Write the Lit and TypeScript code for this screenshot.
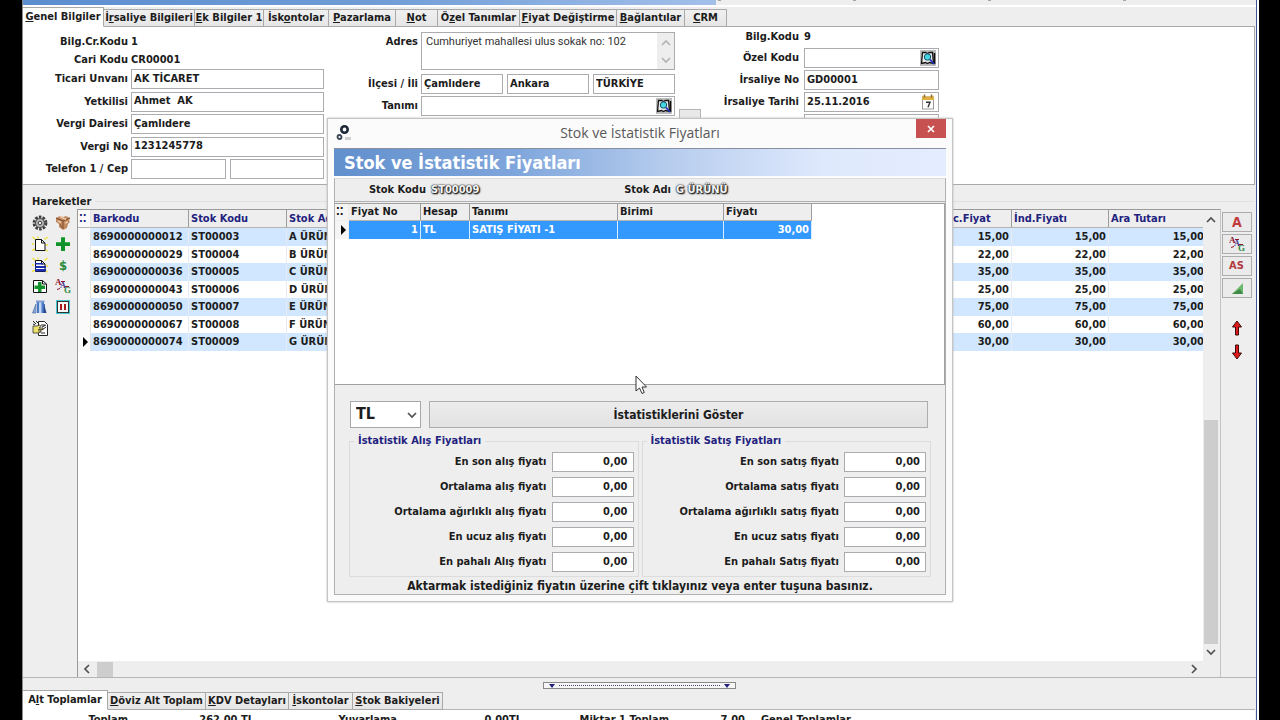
import { LitElement, html, css, svg, nothing } from "lit";
import { customElement } from "lit/decorators.js";

const base = css`
  * {
    box-sizing: border-box;
  }
  :host {
    font-family: "DejaVu Sans Condensed", "DejaVu Sans", "Noto Sans", sans-serif;
    font-size: 11px;
    font-weight: bold;
    line-height: 14px;
    color: #1c1c1c;
  }
  input,
  button,
  select,
  textarea {
    font: inherit;
    color: inherit;
    margin: 0;
    border-radius: 0;
    outline: none;
  }
  input {
    min-width: 0;
    width: 100%;
    height: 20px;
    border: 1px solid #ababb0;
    background: #fff;
    padding: 0 2px 2px;
  }
  button {
    padding: 0;
    border: 0;
    background: none;
  }
  table {
    border-collapse: separate;
    border-spacing: 0;
    table-layout: fixed;
  }
  th,
  td {
    padding: 0 2px;
    overflow: hidden;
    white-space: nowrap;
    text-align: left;
    line-height: 16px;
  }
  th {
    background: #eeeeee;
    border-right: 1px solid #9c9c9c;
    border-bottom: 1px solid #b4b4b4;
    height: 17px;
  }
  .num {
    text-align: right;
  }
  svg {
    display: block;
  }
`;

const icon = (body: unknown, size = 16) =>
  html`<svg width=${size} height=${size} viewBox="0 0 16 16" aria-hidden="true">${body}</svg>`;

const page = svg`<path d="M3.5 3.5h6l3.500 3.500v7.500h-9.500z" fill="#fff" stroke="#111"/><path d="M9.500 3.500v3.500h3.500" fill="none" stroke="#111"/>`;
const rays = svg`<path d="M0.500 1l3 2.500M6 0.500v2M0 14.500l3-1.500M12.500 3.500L15.500 1M14 9h2M0 8h2M13.500 14l2 1" stroke="#f1e23c" stroke-width="1.500"/>`;
const letters = svg`<g font-family="Liberation Serif, serif" font-weight="bold"><text x="0" y="7" font-size="9" fill="#8c1630">A</text><text x="5" y="10" font-size="8" fill="#3b2d8c">A</text><text x="9" y="15" font-size="9" fill="#2f8c46">G</text></g><path d="M6 3.500h4M2 11.500l3-1M10 8.500h4" stroke="#8c1630"/>`;

const icons: Record<string, unknown> = {
  gear: svg`<circle cx="8" cy="8" r="5.600" fill="none" stroke="#3f3f3f" stroke-width="3.600" stroke-dasharray="2.400 1.118"/><circle cx="8" cy="8" r="4.500" fill="#b4b4b4" stroke="#555" stroke-width="1.200"/><circle cx="8" cy="8" r="1.800" fill="#eee" stroke="#444"/>`,
  box: svg`<path d="M1 3l4-2 3 1 3-1 4 2-1 3 1 1-2 2-1 4-4 2-4-3V9L1 7z" fill="#c08a60"/><path d="M1 3l7 3 7-3M8 6v8" stroke="#7d4a2a" fill="none"/><path d="M5 1.500l6 3M10 8l3-1M3 6l3 1.500" stroke="#ecc8a4" stroke-width="1.500"/><path d="M5 9l2 4" stroke="#8d5733"/>`,
  doc: svg`${rays}${page}`,
  plus: svg`<path d="M6 1h4v5h5v4h-5v5H6v-5H1V6h5z" fill="#12922a"/><path d="M6 1h4v1H6zM1 6h5v1H1zM10 6h5v1h-5z" fill="#3fb353"/>`,
  lines: svg`${rays}${page}<path d="M3 6h8v1.500H3zM3 9h11v2H3zM3 12h11v2.500H3z" fill="#1a2bb0"/>`,
  dollar: svg`<text x="4" y="13" font-size="13" font-weight="bold" fill="#2a8a3c" font-family="DejaVu Sans Condensed, sans-serif">$</text>`,
  docplus: svg`<path d="M1.500 2.500h9l4 3.500v8.500h-13z" fill="#fff" stroke="#111"/><path d="M10.500 2.500v3.500h4" fill="none" stroke="#111"/><path d="M6 4h3.500v3.500H13v3.500H9.500v3H6v-3H2.500V7.500H6z" fill="#12922a"/>`,
  letters,
  jars: svg`<path d="M4 2h8v3h1v9H5V5z" fill="#4c79c4"/><path d="M7 2h2.500v12H7z" fill="#c2d7f5"/><path d="M0.500 14L4 5v9z" fill="#8eacd9" stroke="#4c6da6" stroke-width=".7"/><path d="M12 5l2.500 9h-3z" fill="#27468c"/><path d="M4 1.500h8.500v2H4z" fill="#7d9dd2"/>`,
  pause: svg`<rect x="1" y="1" width="14" height="14" fill="#42c7cf"/><rect x="2.500" y="2.500" width="11" height="11" fill="#f8f8f8" stroke="#333"/><path d="M5 5h2v6H5zM9 5h2v6H9z" fill="#a51c1c"/>`,
  hand: svg`<path d="M6.500 1.500h6l3 3v11h-9z" fill="#fff" stroke="#222"/><path d="M1 1l3 3M4 1l3 3M1 4l2 1M9 5h4M10 7l4-2M10 10l4-3M9 13h4" stroke="#222"/><path d="M1 6h4l3-1 1 1.500L7 8h4v1.500H9V12l-3 1H1z" fill="#ece06b" stroke="#333" stroke-width=".8"/><path d="M6 9.500h3M6 11h3" stroke="#333" stroke-width=".8"/>`,
  lookup: svg`<rect width="16" height="16" fill="#bcbcbc"/><path d="M1.500 13.500l1-11h3l2 1 2-1h3l1 11-4-1-2 1-2-1z" fill="#e8e8e8" stroke="#111" stroke-width="1.300"/><path d="M14.500 3v11" stroke="#111" stroke-width="1.600"/><circle cx="7.500" cy="7" r="3.200" fill="#45d6e0" stroke="#14506c"/><path d="M10 9.500l4 4.500" stroke="#2030c0" stroke-width="1.800"/>`,
  calendar: svg`<rect x="2.500" y="3" width="11" height="12" fill="#fff" stroke="#9a9a9a"/><path d="M2 2.500h12V6H2z" fill="#dfae3e"/><path d="M4.500 .5v3M11.500 .5v3" stroke="#8a6b22" stroke-width="1.500"/><path d="M6 8.200h4l-2 5" fill="none" stroke="#333" stroke-width="1.400"/>`,
  redA: svg`<text x="3" y="13" font-size="14" font-weight="bold" fill="#c03a3e" font-family="DejaVu Sans Condensed, sans-serif">A</text>`,
  triangle: svg`<path d="M3 14L14 3v11z" fill="#6cb96e"/><path d="M3 14L11 9l3 5z" fill="#3f8a48"/>`,
  up: svg`<path d="M8 1l4.500 6H9.500v8h-3V7H3.500z" fill="#e01b1b" stroke="#3c0a0a"/>`,
  down: svg`<path d="M8 15l4.500-6H9.500V1h-3v8H3.500z" fill="#e01b1b" stroke="#3c0a0a"/>`,
};

const chevron = (dir: "up" | "down" | "left" | "right", color = "#505050") => {
  const d = { up: "M1 7l4-4 4 4", down: "M1 3l4 4 4-4", left: "M7 1L3 5l4 4", right: "M3 1l4 4-4 4" }[dir];
  return html`<svg width="10" height="10" viewBox="0 0 10 10" aria-hidden="true">
    <path d=${d} fill="none" stroke=${color} stroke-width="1.700" />
  </svg>`;
};

type Tab = [string, string, string];
const tabStrip = (tabs: Tab[], kind: string) => html`<div class="tabs ${kind}" role="tablist">
  ${tabs.map(
    ([a, key, b], i) => html`<button role="tab" class="tab ${i ? "" : "active"}" aria-selected=${i ? "false" : "true"}><span>${a}<u>${key}</u>${b}</span></button>`
  )}
</div>`;

@customElement("price-dialog")
class PriceDialog extends LitElement {
  static styles = [
    base,
    css`
      :host {
        display: block;
        width: 626px;
        background: #fbfbfb;
        border: 1px solid #c4c4c4;
        box-shadow: 0 0 2px #bbb;
        padding: 0 6px 6px;
      }
      .title {
        height: 29px;
        display: grid;
        grid-template-columns: 30px 1fr 30px;
        align-items: start;
        font: 14px/28px "Open Sans", "Noto Sans", sans-serif;
        color: #585858;
        text-align: center;
      }
      .logo {
        margin: 5px 0 0 1px;
      }
      .close {
        height: 19px;
        background: #c75050;
        display: grid;
        place-items: center;
      }
      .banner {
        height: 28px;
        border-top: 1px solid #8890a0;
        background: linear-gradient(to right, #6290cd, #7fa6dc 30%, #b7cdee 55%, #dfe9fd 80%, #e4edfe);
        color: #fff;
        font-size: 18px;
        line-height: 27px;
        padding-left: 10px;
        margin: 0 0 2px;
      }
      .body {
        background: #eeeeee;
        border: 1px solid #b0b0b0;
        border-top-color: #dcdcdc;
      }
      .info {
        height: 23px;
        display: grid;
        grid-template-columns: 91px 100px 135px 1fr;
        column-gap: 5px;
        line-height: 22px;
        border-bottom: 1px solid #b0b0b0;
        margin: 0 0 1px;
      }
      .info dt {
        text-align: right;
      }
      .info dd {
        margin: 0;
        color: #f4f4f4;
        text-shadow: 1px 1px 1px #222, 0 0 2px #222, 0 0 1px #222, 1px 1px 2px #555;
      }
      .grid {
        height: 182px;
        background: #fff;
        border: 1px solid #a0a0a0;
        border-left: 0;
      }
      .grid table {
        width: 477px;
      }
      .c0 { width: 14px; }
      .c1 { width: 72px; }
      .c2 { width: 49px; }
      .c3 { width: 148px; }
      .c4 { width: 106px; }
      .c5 { width: 88px; }
      .grid td {
        height: 18px;
        background: #3399ff;
        color: #fff;
        border-right: 1px solid #d8ebff;
        padding-bottom: 1px;
      }
      .grid td.mark,
      .grid th.mark {
        background: #f4f4f4;
        color: #111;
        padding: 0 0 0 1px;
        border-color: #eee;
      }
      .row {
        display: grid;
        grid-template-columns: 71px 1fr;
        gap: 8px;
        padding: 16px 17px 0 15px;
      }
      .pick {
        position: relative;
      }
      select {
        appearance: none;
        width: 100%;
        height: 27px;
        border: 1px solid #a8a8a8;
        background: #fff;
        font-size: 16px;
        padding: 0 5px 2px;
      }
      .pick svg {
        position: absolute;
        right: 4px;
        top: 9px;
        pointer-events: none;
      }
      .show {
        height: 27px;
        border: 1px solid #adadad;
        background: linear-gradient(#ececec, #e2e2e2);
        font-size: 12px;
      }
      .groups {
        display: grid;
        grid-template-columns: 1fr 1fr;
        gap: 3px;
        padding: 6px 14px 0;
      }
      fieldset {
        margin: 0;
        border: 1px solid #dcdcdc;
        min-width: 0;
        padding: 4px 4px 4px;
        display: grid;
        gap: 5px;
      }
      legend {
        color: #22227e;
        padding: 0 4px;
      }
      .field {
        display: grid;
        grid-template-columns: 1fr 82px;
        gap: 5px;
        text-align: right;
        align-items: center;
      }
      .field input {
        text-align: right;
        padding-right: 5px;
      }
      .hint {
        margin: 0;
        text-align: center;
        font-size: 12px;
        line-height: 15px;
        height: 17px;
        padding-top: 2px;
      }
    `,
  ];

  private group(title: string, prefix: string, labels: string[]) {
    return html`<fieldset>
      <legend>${title}</legend>
      ${labels.map(
        (l, i) => html`<div class="field"><label for=${prefix + i}>${l}</label><input id=${prefix + i} .value=${"0,00"} /></div>`
      )}
    </fieldset>`;
  }

  render() {
    return html`
      <div class="title">
        <svg class="logo" width="18" height="18" viewBox="0 0 18 18" aria-hidden="true">
          <circle cx="9.500" cy="5.500" r="3.200" fill="none" stroke="#1d2838" stroke-width="2.600" />
          <circle cx="4.500" cy="13" r="2" fill="none" stroke="#3a4656" stroke-width="1.800" />
          <path d="M10 13h6v3h-6z" fill="#d0d0d0" />
        </svg>
        <span>Stok ve İstatistik Fiyatları</span>
        <button class="close" aria-label="Kapat">
          <svg width="8" height="8" viewBox="0 0 8 8"><path d="M1 1l6 6M7 1L1 7" stroke="#fff" stroke-width="1.700" /></svg>
        </button>
      </div>
      <h2 class="banner">Stok ve İstatistik Fiyatları</h2>
      <div class="body">
        <dl class="info">
          <dt>Stok Kodu</dt><dd>ST00009</dd><dt>Stok Adı</dt><dd>G ÜRÜNÜ</dd>
        </dl>
        <div class="grid">
          <table>
            <colgroup>${[0, 1, 2, 3, 4, 5].map((i) => html`<col class="c${i}" />`)}</colgroup>
            <thead>
              <tr><th class="mark">⁚⁚</th><th>Fiyat No</th><th>Hesap</th><th>Tanımı</th><th>Birimi</th><th>Fiyatı</th></tr>
            </thead>
            <tbody>
              <tr>
                <td class="mark"><svg width="12" height="12" viewBox="0 0 12 12"><path d="M5 1l5 5-5 5z" fill="#000" /></svg></td>
                <td class="num">1</td><td>TL</td><td>SATIŞ FİYATI -1</td><td></td><td class="num">30,00</td>
              </tr>
            </tbody>
          </table>
        </div>
        <div class="row">
          <div class="pick"><select aria-label="Döviz"><option>TL</option></select>${chevron("down")}</div>
          <button class="show">İstatistiklerini Göster</button>
        </div>
        <div class="groups">
          ${this.group("İstatistik Alış Fiyatları", "alis", ["En son alış fiyatı", "Ortalama alış fiyatı", "Ortalama ağırlıklı alış fiyatı", "En ucuz alış fiyatı", "En pahalı Alış fiyatı"])}
          ${this.group("İstatistik Satış Fiyatları", "satis", ["En son satış fiyatı", "Ortalama satış fiyatı", "Ortalama ağırlıklı satış fiyatı", "En ucuz satış fiyatı", "En pahalı Satış fiyatı"])}
        </div>
        <p class="hint">Aktarmak istediğiniz fiyatın üzerine çift tıklayınız veya enter tuşuna basınız.</p>
      </div>
    `;
  }
}

const topTabs: Tab[] = [
  ["", "G", "enel Bilgiler"], ["İ", "r", "saliye Bilgileri"], ["", "E", "k Bilgiler 1"], ["İsk", "o", "ntolar"], ["", "P", "azarlama"],
  ["", "N", "ot"], ["Ö", "z", "el Tanımlar"], ["", "F", "iyat Değiştirme"], ["", "B", "ağlantılar"], ["", "C", "RM"],
];
const bottomTabs: Tab[] = [
  ["A", "l", "t Toplamlar"], ["", "D", "öviz Alt Toplam"], ["", "K", "DV Detayları"], ["", "İ", "skontolar"], ["", "S", "tok Bakiyeleri"],
];
const rows = [
  ["8690000000012", "ST00003", "A ÜRÜNÜ", "15,00"],
  ["8690000000029", "ST00004", "B ÜRÜNÜ", "22,00"],
  ["8690000000036", "ST00005", "C ÜRÜNÜ", "35,00"],
  ["8690000000043", "ST00006", "D ÜRÜNÜ", "25,00"],
  ["8690000000050", "ST00007", "E ÜRÜNÜ", "75,00"],
  ["8690000000067", "ST00008", "F ÜRÜNÜ", "60,00"],
  ["8690000000074", "ST00009", "G ÜRÜNÜ", "30,00"],
];
const tools: [string, string][] = [
  ["gear", "Ayarlar"], ["box", "Paket"], ["doc", "Yeni"], ["plus", "Ekle"], ["lines", "Liste"], ["dollar", "Fiyat"],
  ["docplus", "Yeni satır"], ["letters", "Harfler"], ["jars", "Stok"], ["pause", "Beklet"], ["hand", "Seç"],
];

@customElement("app-root")
class AppRoot extends LitElement {
  static styles = [
    base,
    css`
      :host {
        display: block;
        position: relative;
        height: 100vh;
        overflow: hidden;
        background: #000;
        padding: 0 21px 0 22px;
      }
      .window {
        height: 100%;
        background: #eeeeee;
        border-left: 1px solid #8c8c8c;
        border-right: 2px solid #fff;
        display: flex;
        flex-direction: column;
      }
      .inner {
        flex: 1;
        min-height: 0;
        border-right: 1px solid #3d5990;
        display: flex;
        flex-direction: column;
      }
      .caption {
        height: 7px;
        flex: none;
        border-bottom: 2px solid #fff;
        display: flex;
      }
      .caption span {
        width: 693px;
        background: linear-gradient(to right, #5c8ecf, #6f9cd6 50%, #a3c0ea);
      }
      .caption i {
        flex: 1;
        height: 1px;
        background: repeating-linear-gradient(to right, #eee 0 2px, #a4a4a4 2px 5px, #eee 5px 135px);
      }
      .tabs {
        flex: none;
        height: 20px;
        display: grid;
        align-items: end;
        position: relative;
        margin-bottom: -1px;
      }
      .tabs.main {
        grid-template-columns: 81px 91px 69px 65px 67px 42px 82px 97px 68px 42px;
      }
      .tabs.totals {
        grid-template-columns: 85px 98px 83px 64px 90px;
      }
      .tab {
        height: 18px;
        border: 1px solid #a9a9a9;
        border-left: 0;
        background: linear-gradient(#f0f0f0, #e6e6e6);
        line-height: 16px;
        white-space: nowrap;
        overflow: visible;
      }
      .tab.active {
        height: 20px;
        background: #fff;
        border-bottom-color: #fff;
        line-height: 17px;
        padding-bottom: 1px;
      }
      .panel {
        flex: none;
        background: #fff;
        border: 1px solid #a9a9a9;
        border-left: 0;
        margin-right: 1px;
        height: 159px;
        display: grid;
        grid-template-columns: 301px 351px 1fr;
      }
      .form {
        display: grid;
        align-content: start;
        align-items: center;
        column-gap: 3px;
        text-align: right;
      }
      .form output {
        text-align: left;
      }
      .left {
        grid-template-columns: 105px 193px;
        grid-template-rows: 18px 17px 22px 23px 22px 23px 22px;
        padding-top: 6px;
      }
      .middle {
        grid-template-columns: 94px 254px;
        grid-template-rows: 41px 22px 22px;
        padding-top: 5px;
      }
      .right {
        grid-template-columns: 98px 135px;
        grid-template-rows: 20px;
        grid-auto-rows: 22px;
        column-gap: 5px;
      }
      .two,
      .three {
        display: grid;
        gap: 4px;
      }
      .two {
        grid-template-columns: 95px 1fr;
      }
      .three {
        grid-template-columns: repeat(3, 1fr);
      }
      .top {
        align-self: start;
        padding-top: 3px;
      }
      .area {
        display: flex;
        height: 38px;
        border: 1px solid #ababb0;
        align-self: start;
      }
      textarea {
        flex: 1;
        min-width: 0;
        resize: none;
        border: 0;
        padding: 1px 4px;
        overflow: hidden;
        font: 11px/15px Roboto, "Liberation Sans", sans-serif;
        color: #333;
      }
      .spin {
        width: 17px;
        background: #eee;
        display: flex;
        flex-direction: column;
        justify-content: space-between;
        align-items: center;
        padding: 5px 0 4px;
      }
      .lookup {
        position: relative;
        display: flex;
      }
      .lookup button {
        position: absolute;
        right: 3px;
        top: 2px;
      }
      .tiny {
        background: #e8e8e8;
        border: 1px solid #b5b5b5;
        width: 22px;
        height: 12px;
        margin: 82px 0 0 4px;
      }
      .side {
        display: flex;
      }
      .caption2 {
        flex: none;
        margin: 9px 2px 0 0;
        padding-left: 9px;
        font-size: 11px;
        line-height: 15px;
        display: flex;
        align-items: center;
        gap: 4px;
      }
      .caption2::after {
        content: "";
        flex: 1;
        border-top: 1px solid #e0e0e0;
      }
      .work {
        flex: 1;
        min-height: 0;
        display: grid;
        grid-template-columns: 54px 1fr 35px;
        border-bottom: 1px solid #b5b5b5;
      }
      .tools {
        display: grid;
        grid-template-columns: 23px 23px;
        grid-auto-rows: 21px;
        align-content: start;
        align-items: center;
        justify-items: center;
        padding: 3px 0 0 5px;
      }
      .sheet {
        border: 1px solid #9a9a9a;
        border-bottom: 0;
        border-right-color: #c4c4c4;
        background: #eeeeee;
        display: grid;
        grid-template-columns: 1fr 17px;
        grid-template-rows: 1fr 16px;
        min-height: 0;
        min-width: 0;
      }
      .view {
        background: #fff;
        overflow: hidden;
        min-width: 0;
      }
      .view table {
        width: calc(100% + 4px);
      }
      .view th {
        color: #22227e;
        height: 18px;
        padding-top: 1px;
      }
      .view th.cut {
        padding-left: 0;
      }
      .view td {
        height: 17px;
        border-right: 1px solid #e6ecf2;
      }
      .view tr:nth-child(odd) td {
        background: #d0e7ff;
        height: 18px;
      }
      .view tr td.mark,
      .view tr:nth-child(odd) td.mark,
      .view th.mark {
        background: #fafafa;
        padding: 0 0 0 1px;
        border-right-color: #e4e4e4;
      }
      .k0 { width: 13px; }
      .k1 { width: 98px; }
      .k2 { width: 98px; }
      .k4 { width: 59px; }
      .k5 { width: 97px; }
      .k6 { width: 98px; }
      .vbar {
        display: flex;
        flex-direction: column;
        align-items: center;
        padding: 5px 1px 4px 0;
      }
      .vthumb {
        width: 14px;
        flex: 226;
        background: #cdcdcd;
        margin-bottom: 3px;
      }
      .vspace {
        flex: 196;
      }
      .hbar {
        grid-column: 1 / -1;
        display: flex;
        align-items: center;
        gap: 5px;
        padding: 0 21px 0 4px;
      }
      .hthumb {
        width: 16px;
        height: 15px;
        background: #cdcdcd;
      }
      .grow {
        flex: 1;
      }
      .actions {
        display: flex;
        flex-direction: column;
        align-items: center;
        gap: 2px;
        padding: 3px 4px 0 0;
      }
      .act {
        width: 30px;
        height: 20px;
        border: 1px solid #adadad;
        background: #ebebeb;
        display: grid;
        place-items: center;
        color: #b0383e;
      }
      .arrows {
        display: grid;
        gap: 8px;
        padding-top: 20px;
      }
      .split {
        flex: none;
        align-self: center;
        margin: 4px 0 1px;
        width: 193px;
        height: 7px;
        border: 1px solid #8a8a8a;
        background: #f6f6f6;
        display: flex;
        align-items: center;
        gap: 4px;
        padding: 0 5px;
      }
      .dots {
        flex: 1;
        border-top: 1px dotted #44447c;
      }
      .sum {
        flex: none;
        height: 11px;
        background: #fff;
        border-top: 1px solid #b5b5b5;
        margin-right: 1px;
        display: grid;
        grid-template-columns: 105px 126px 143px 125px 147px 76px 1fr;
        padding-top: 3px;
        text-align: right;
        white-space: nowrap;
      }
      .sum .last {
        text-align: left;
        padding-left: 16px;
      }
      .overlay {
        position: absolute;
        inset: 0;
        display: grid;
        place-items: center;
      }
      .pointer {
        position: absolute;
        left: 635px;
        top: 375px;
      }
    `,
  ];

  private field(id: string, label: string, value: string) {
    return html`<label for=${id}>${label}</label><input id=${id} .value=${value} />`;
  }

  private tool(name: string, label: string) {
    return html`<button aria-label=${label}>${icon(icons[name])}</button>`;
  }

  render() {
    return html`
      <div class="window">
        <div class="inner">
          <div class="caption"><span></span><i></i></div>
          ${tabStrip(topTabs, "main")}
          <div class="panel">
            <div class="form left">
              <span>Bilg.Cr.Kodu</span><output>1</output>
              <span>Cari Kodu</span><output>CR00001</output>
              ${this.field("unvan", "Ticari Unvanı", "AK TİCARET")}
              ${this.field("yetkili", "Yetkilisi", "Ahmet  AK")}
              ${this.field("daire", "Vergi Dairesi", "Çamlıdere")}
              ${this.field("vno", "Vergi No", "1231245778")}
              <label for="tel">Telefon 1 / Cep</label>
              <div class="two"><input id="tel" /><input aria-label="Cep" /></div>
            </div>
            <div class="form middle">
              <label class="top" for="adres">Adres</label>
              <div class="area">
                <textarea id="adres" .value=${"Cumhuriyet mahallesi ulus sokak no: 102"}></textarea>
                <div class="spin">${chevron("up", "#b4b4b4")}${chevron("down", "#b4b4b4")}</div>
              </div>
              <label for="ilce">İlçesi / İli</label>
              <div class="three">
                <input id="ilce" .value=${"Çamlıdere"} /><input aria-label="İli" .value=${"Ankara"} /><input aria-label="Ülke" .value=${"TÜRKİYE"} />
              </div>
              <label for="tanim">Tanımı</label>
              <div class="lookup"><input id="tanim" />${this.tool("lookup", "Ara")}</div>
            </div>
            <div class="side">
              <button class="tiny" aria-label="Diğer"></button>
              <div class="form right">
                <span>Bilg.Kodu</span><output>9</output>
                <label for="ozel">Özel Kodu</label>
                <div class="lookup"><input id="ozel" />${this.tool("lookup", "Ara")}</div>
                ${this.field("irsno", "İrsaliye No", "GD00001")}
                <label for="tarih">İrsaliye Tarihi</label>
                <div class="lookup"><input id="tarih" .value=${"25.11.2016"} />${this.tool("calendar", "Takvim")}</div>
                <span></span><input aria-label="Saat" />
              </div>
            </div>
          </div>
          <h3 class="caption2">Hareketler</h3>
          <div class="work">
            <div class="tools">${tools.map(([n, l]) => this.tool(n, l))}</div>
            <div class="sheet">
              <div class="view">
                <table>
                  <colgroup><col class="k0" /><col class="k1" /><col class="k2" /><col /><col class="k4" /><col class="k5" /><col class="k6" /></colgroup>
                  <thead>
                    <tr><th class="mark">⁚⁚</th><th>Barkodu</th><th>Stok Kodu</th><th>Stok Adı</th><th class="cut">c.Fiyat</th><th>İnd.Fiyatı</th><th>Ara Tutarı</th></tr>
                  </thead>
                  <tbody>
                    ${rows.map(
                      ([bar, code, name, price], i) => html`<tr>
                        <td class="mark">${i === rows.length - 1 ? html`<svg width="12" height="12" viewBox="0 0 12 12"><path d="M4 1l5 5-5 5z" fill="#000" /></svg>` : nothing}</td>
                        <td>${bar}</td><td>${code}</td><td>${name}</td><td class="num">${price}</td><td class="num">${price}</td><td class="num">${price}</td>
                      </tr>`
                    )}
                  </tbody>
                </table>
              </div>
              <div class="vbar">${chevron("up")}<div class="vspace"></div><div class="vthumb"></div>${chevron("down")}</div>
              <div class="hbar">${chevron("left")}<div class="hthumb"></div><div class="grow"></div>${chevron("right")}</div>
            </div>
            <div class="actions">
              <button class="act" aria-label="A">${icon(icons.redA)}</button>
              <button class="act" aria-label="Harfler">${icon(icons.letters)}</button>
              <button class="act">AS</button>
              <button class="act" aria-label="Üçgen">${icon(icons.triangle)}</button>
              <div class="arrows">${this.tool("up", "Yukarı")}${this.tool("down", "Aşağı")}</div>
            </div>
          </div>
          <div class="split">
            <svg width="6" height="4" viewBox="0 0 6 4"><path d="M0 0h6L3 4z" fill="#22227e" /></svg>
            <div class="dots"></div>
            <svg width="6" height="4" viewBox="0 0 6 4"><path d="M0 0h6L3 4z" fill="#22227e" /></svg>
          </div>
          ${tabStrip(bottomTabs, "totals")}
          <div class="sum">
            <span>Toplam</span><span>262,00 TL</span><span>Yuvarlama</span><span>0,00TL</span><span>Miktar 1 Toplam</span><span>7,00</span><span class="last">Genel Toplamlar</span>
          </div>
        </div>
      </div>
      <div class="overlay"><price-dialog></price-dialog></div>
      <svg class="pointer" width="12" height="20" viewBox="0 0 12 20" aria-hidden="true">
        <path d="M1 1v15l3.500-3 2.500 5.500 2.300-1L7 12h4.500z" fill="#fff" stroke="#333" />
      </svg>
    `;
  }
}
